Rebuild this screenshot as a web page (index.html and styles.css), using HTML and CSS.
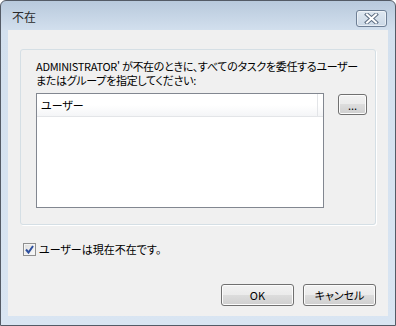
FILE: index.html
```html
<!DOCTYPE html>
<html lang="ja">
<head>
    <meta charset="UTF-8">
    <title>不在</title>
    <link rel="stylesheet" href="styles.css">
</head>
<body>
    <div class="window">
        <div class="titlebar">
            <span class="title">不在</span>
            <button class="close" title="閉じる">
                <svg width="15" height="11" viewBox="0 0 15 11">
                    <path d="M3 1.5 L12 9.5 M12 1.5 L3 9.5" stroke="#5f6f84" stroke-width="4" stroke-linecap="square"/>
                    <path d="M3 1.5 L12 9.5 M12 1.5 L3 9.5" stroke="#ffffff" stroke-width="2" stroke-linecap="square"/>
                </svg>
            </button>
        </div>
        <div class="client">
            <div class="group">
                <div class="prompt">
                    <span class="prompt-line">ADMINISTRATOR' が不在のときに、すべてのタスクを委任するユーザー</span>
                    <span class="prompt-line">またはグループを指定してください:</span>
                </div>
                <div class="list-row">
                    <div class="list">
                        <div class="list-header">
                            <div class="col">ユーザー</div>
                            <div class="col-rest"></div>
                        </div>
                    </div>
                    <button class="btn btn-browse">...</button>
                </div>
            </div>
            <label class="check-row">
                <span class="checkbox">
                    <svg width="9" height="9" viewBox="0 0 9 9">
                        <path d="M1 4.5 L3.5 7.5 L8 1" fill="none" stroke="#2d4f9e" stroke-width="2"/>
                    </svg>
                </span>
                ユーザーは現在不在です。
            </label>
            <div class="actions">
                <button class="btn">OK</button>
                <button class="btn">キャンセル</button>
            </div>
        </div>
    </div>
</body>
</html>
```

FILE: styles.css
```css
body {
    margin: 0;
    font-family: "Noto Sans CJK JP", sans-serif;
    font-size: 11px;
    font-feature-settings: "palt";
    background: #ffffff;
}
.window {
    width: 396px;
    height: 326px;
    box-sizing: border-box;
    border: 1px solid #545b66;
    border-radius: 6px 6px 0 0;
    background: linear-gradient(#b8c9dc, #d3e0ee 30px, #d9e5f2);
    overflow: hidden;
}
.titlebar {
    height: 29px;
    display: flex;
    justify-content: space-between;
    align-items: flex-start;
    padding: 0 8px 0 11px;
}
.title {
    margin-top: 8px;
    font-size: 12px;
    line-height: 16px;
    color: #2a2a2a;
}
.close {
    margin-top: 9px;
    width: 31px;
    height: 17px;
    padding: 0;
    border: 1px solid #6e7f95;
    border-radius: 3px;
    background: linear-gradient(#dfe8f1, #cbd8e6);
    box-shadow: inset 0 0 0 1px rgba(255, 255, 255, 0.5);
    display: flex;
    align-items: center;
    justify-content: center;
}
.client {
    margin: 0 7px;
    height: 286px;
    box-sizing: border-box;
    background: #f0f0f0;
    padding: 19px 12px 0 12px;
}
.group {
    width: 356px;
    height: 176px;
    box-sizing: border-box;
    border: 1px solid #d5dfe5;
    border-radius: 3px;
    box-shadow: 1px 1px 0 #ffffff;
    padding: 9px 0 0 15px;
}
.prompt {
    white-space: nowrap;
    letter-spacing: -0.3px;
}
.prompt-line {
    display: block;
    height: 14px;
    line-height: 14px;
}
.list-row {
    display: flex;
    align-items: flex-start;
    margin-top: 6px;
}
.list {
    width: 288px;
    height: 115px;
    box-sizing: border-box;
    border: 1px solid #828790;
    background: #ffffff;
}
.list-header {
    display: flex;
    height: 23px;
    box-sizing: border-box;
    border-bottom: 1px solid #e3e5e8;
    background: linear-gradient(#ffffff 50%, #f4f5f7);
}
.col {
    width: 281px;
    box-sizing: border-box;
    border-right: 1px solid #e3e5e8;
    padding-left: 4px;
    line-height: 22px;
}
.col-rest {
    flex: 1;
}
.btn {
    font-family: inherit;
    font-size: 11px;
    font-feature-settings: "palt";
    color: #000000;
    width: 73px;
    height: 22px;
    padding: 0;
    border: 1px solid #707070;
    border-radius: 3px;
    background: linear-gradient(#f2f2f2, #ebebeb 50%, #dddddd 50%, #cfcfcf);
    box-shadow: inset 0 0 0 1px #fcfcfc;
}
.btn-browse {
    width: 29px;
    height: 21px;
    margin: 1px 0 0 14px;
    line-height: 14px;
}
.check-row {
    display: flex;
    align-items: center;
    margin: 17px 0 0 3px;
    height: 14px;
    line-height: 14px;
}
.checkbox {
    width: 13px;
    height: 13px;
    box-sizing: border-box;
    border: 1px solid #8f8f8f;
    background: linear-gradient(135deg, #dcdcdc, #fbfbfb);
    box-shadow: inset 0 0 0 1px #f4f4f4;
    display: flex;
    align-items: center;
    justify-content: center;
    margin-right: 3px;
}
.actions {
    display: flex;
    justify-content: flex-end;
    gap: 9px;
    margin-top: 28px;
}
```
